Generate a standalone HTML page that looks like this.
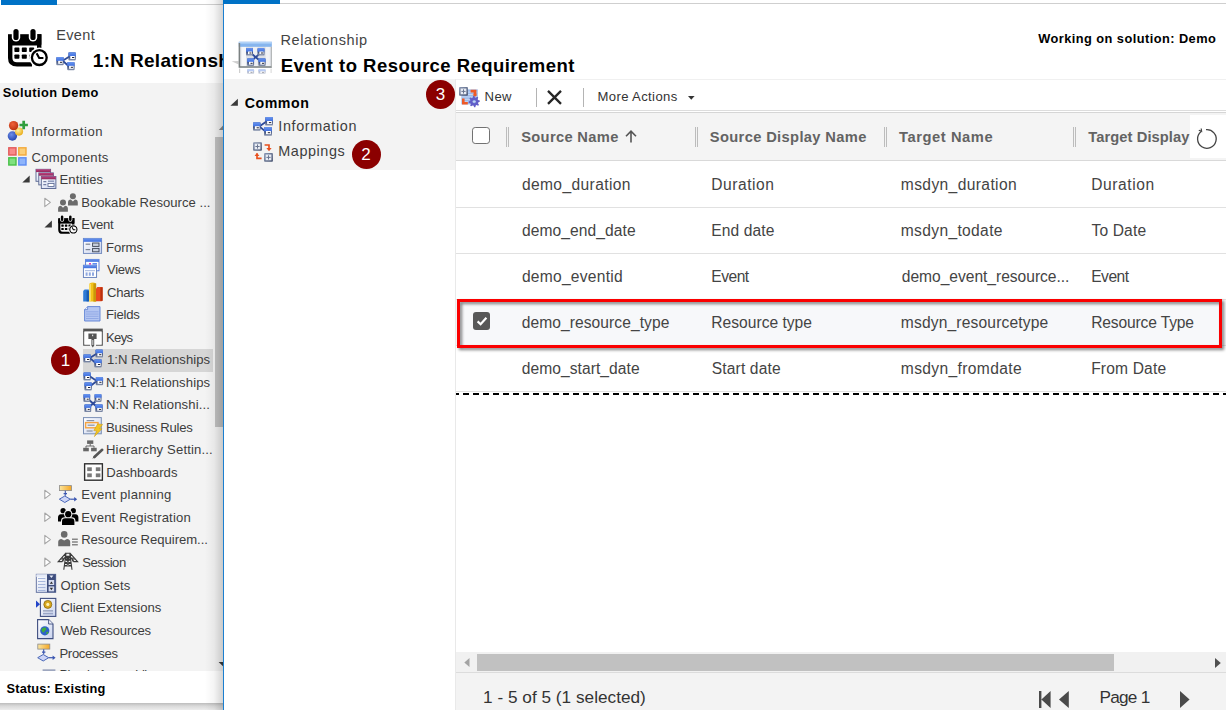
<!DOCTYPE html>
<html><head><meta charset="utf-8">
<style>
*{box-sizing:border-box;margin:0;padding:0}
html,body{width:1226px;height:710px;overflow:hidden;background:#fff;font-family:"Liberation Sans",sans-serif;color:#444}
.a{position:absolute}
.t{position:absolute;white-space:nowrap;line-height:1}
svg{position:absolute;overflow:visible}
#left{left:0;top:0;width:223px;height:710px;overflow:hidden;background:#fff}
#right{left:223px;top:0;width:1003px;height:710px;overflow:hidden;background:#fff}
.badge{position:absolute;width:29px;height:29px;border-radius:50%;background:#8b0000;color:#fff;font-size:17px;text-align:center;line-height:29px}
.hl{position:absolute;left:233px;width:770px;height:1px;background:#e1e1e1}
.sep{position:absolute;top:126.5px;width:3px;height:20px;border:1px solid #bcbcbc;border-top:none;border-bottom:none;background:#f3f3f3}
</style></head><body>
<!-- LEFT WINDOW -->
<div id="left" class="a">
  <div class="a" style="left:1px;top:0;width:56px;height:5px;background:#0072c6"></div>
  <div class="a" style="left:57px;top:4px;width:170px;height:1px;background:#cfcfcf"></div>
  <div class="a" style="left:0;top:83px;width:223px;height:588px;background:#f3f3f3"></div>
  <div id="treeclip" class="a" style="left:0;top:83px;width:215px;height:588px;overflow:hidden"><div class="a" style="left:0;top:-83px">
    <div class="a" style="left:83px;top:349px;width:130px;height:23px;background:#d6d6d6"></div>
<div class="t" style="left:31.30px;top:124.51px;font-size:13.1px;letter-spacing:0.578px;color:#3d3d3d">Information</div>
<div class="t" style="left:31.50px;top:150.51px;font-size:13.1px;letter-spacing:0.290px;color:#3d3d3d">Components</div>
<div class="t" style="left:59.40px;top:172.91px;font-size:13.1px;letter-spacing:0.116px;color:#3d3d3d">Entities</div>
<div class="t" style="left:81.20px;top:195.51px;font-size:13.1px;letter-spacing:0.021px;color:#3d3d3d">Bookable Resource ...</div>
<div class="t" style="left:81.20px;top:217.91px;font-size:13.1px;letter-spacing:-0.261px;color:#3d3d3d">Event</div>
<div class="t" style="left:106.00px;top:240.51px;font-size:13.1px;letter-spacing:-0.012px;color:#3d3d3d">Forms</div>
<div class="t" style="left:107.00px;top:262.91px;font-size:13.1px;letter-spacing:-0.286px;color:#3d3d3d">Views</div>
<div class="t" style="left:107.00px;top:285.51px;font-size:13.1px;letter-spacing:-0.244px;color:#3d3d3d">Charts</div>
<div class="t" style="left:106.00px;top:307.91px;font-size:13.1px;letter-spacing:-0.216px;color:#3d3d3d">Fields</div>
<div class="t" style="left:106.00px;top:330.51px;font-size:13.1px;letter-spacing:-0.654px;color:#3d3d3d">Keys</div>
<div class="t" style="left:106.90px;top:352.91px;font-size:13.1px;letter-spacing:0.033px;color:#3d3d3d">1:N Relationships</div>
<div class="t" style="left:106.00px;top:375.51px;font-size:13.1px;letter-spacing:0.089px;color:#3d3d3d">N:1 Relationships</div>
<div class="t" style="left:106.00px;top:397.91px;font-size:13.1px;letter-spacing:0.115px;color:#3d3d3d">N:N Relationshi...</div>
<div class="t" style="left:106.00px;top:420.51px;font-size:13.1px;letter-spacing:-0.269px;color:#3d3d3d">Business Rules</div>
<div class="t" style="left:106.00px;top:442.91px;font-size:13.1px;letter-spacing:0.143px;color:#3d3d3d">Hierarchy Settin...</div>
<div class="t" style="left:106.30px;top:465.51px;font-size:13.1px;letter-spacing:0.060px;color:#3d3d3d">Dashboards</div>
<div class="t" style="left:81.20px;top:487.91px;font-size:13.1px;letter-spacing:0.273px;color:#3d3d3d">Event planning</div>
<div class="t" style="left:81.20px;top:510.51px;font-size:13.1px;letter-spacing:0.147px;color:#3d3d3d">Event Registration</div>
<div class="t" style="left:81.20px;top:532.91px;font-size:13.1px;letter-spacing:-0.032px;color:#3d3d3d">Resource Requirem...</div>
<div class="t" style="left:82.20px;top:555.51px;font-size:13.1px;letter-spacing:-0.417px;color:#3d3d3d">Session</div>
<div class="t" style="left:60.40px;top:578.51px;font-size:13.1px;letter-spacing:0.153px;color:#3d3d3d">Option Sets</div>
<div class="t" style="left:60.40px;top:601.31px;font-size:13.1px;letter-spacing:-0.020px;color:#3d3d3d">Client Extensions</div>
<div class="t" style="left:60.40px;top:623.91px;font-size:13.1px;letter-spacing:-0.180px;color:#3d3d3d">Web Resources</div>
<div class="t" style="left:59.40px;top:646.51px;font-size:13.1px;letter-spacing:-0.298px;color:#3d3d3d">Processes</div>
<div class="t" style="left:59.40px;top:668.21px;font-size:13.1px;letter-spacing:-0.600px;color:#3d3d3d">Plug-in Assemblies</div>
  </div></div>
  <svg style="left:0;top:0" width="223" height="710" viewBox="0 0 223 710"><defs>
<linearGradient id="gt" x1="0" y1="0" x2="0" y2="1"><stop offset="0" stop-color="#6a95ee"/><stop offset="1" stop-color="#3e6fe0"/></linearGradient>
<linearGradient id="gb" x1="0" y1="0" x2="0" y2="1"><stop offset="0" stop-color="#3f5690"/><stop offset="0.6" stop-color="#475883"/><stop offset="1" stop-color="#8793ad"/></linearGradient>
<linearGradient id="gw" x1="0" y1="0" x2="1" y2="1"><stop offset="0" stop-color="#ffffff"/><stop offset="1" stop-color="#c9d3ee"/></linearGradient>
<linearGradient id="go" x1="0" y1="0" x2="1" y2="0"><stop offset="0" stop-color="#fbe6a0"/><stop offset="1" stop-color="#f5a623"/></linearGradient>
<linearGradient id="gm" x1="0" y1="0" x2="0" y2="1"><stop offset="0" stop-color="#c0407e"/><stop offset="1" stop-color="#8e2a5c"/></linearGradient>
<linearGradient id="gs" x1="0" y1="0" x2="1" y2="1"><stop offset="0" stop-color="#8a98b4"/><stop offset="1" stop-color="#43506e"/></linearGradient>
<radialGradient id="rr" cx=".4" cy=".35" r=".7"><stop offset="0" stop-color="#f0623a"/><stop offset="1" stop-color="#b8300e"/></radialGradient>
<radialGradient id="rb" cx=".4" cy=".35" r=".7"><stop offset="0" stop-color="#6d8de8"/><stop offset="1" stop-color="#2243ae"/></radialGradient>
<radialGradient id="ry" cx=".4" cy=".35" r=".7"><stop offset="0" stop-color="#fff0a0"/><stop offset="1" stop-color="#e8a810"/></radialGradient>
</defs><g transform="translate(8,29) scale(1.0)"><path d="M2.2 7.5 H31.2 V20 H29 V16.5 H4.4 V29 Q4.4 33.2 9 33.2 H24 V37.6 H9 Q0 37.6 0 29 V7.5 Z" fill="#000"/><rect x="0" y="5.2" width="33.4" height="10.5" fill="#000"/><rect x="29" y="5.2" width="4.4" height="20" fill="#000"/><rect x="3.8" y="-1.2" width="8.4" height="13.8" rx="4.2" fill="#fff"/><rect x="5.4" y="0" width="5.2" height="11" rx="2.6" fill="#000"/><rect x="20.8" y="-1.2" width="8.4" height="13.8" rx="4.2" fill="#fff"/><rect x="22.4" y="0" width="5.2" height="11" rx="2.6" fill="#000"/><rect x="6.4" y="18.6" width="5" height="4.4" rx="0.8" fill="#000"/><rect x="13.8" y="18.6" width="5" height="4.4" rx="0.8" fill="#000"/><rect x="21.2" y="18.6" width="5" height="4.4" rx="0.8" fill="#000"/><rect x="6.4" y="25.4" width="5" height="4.4" rx="0.8" fill="#000"/><rect x="13.8" y="25.4" width="5" height="4.4" rx="0.8" fill="#000"/><rect x="21.2" y="25.4" width="5" height="4.4" rx="0.8" fill="#000"/><circle cx="31.3" cy="28.6" r="10.2" fill="#fff"/><circle cx="31.3" cy="28.6" r="7.4" fill="#fff" stroke="#000" stroke-width="2.3"/><path d="M28.6 24.2 L31.2 29 H35.4" fill="none" stroke="#000" stroke-width="2.1"/></g><path d="M63.0 60.5 L69.5 56.5 M63.0 61.0 L68.5 66.0" stroke="#2d4a9a" stroke-width="1.8" fill="none"/><rect x="56.3" y="57.0" width="7.4" height="8.2" rx="0.9" fill="url(#gb)"/><rect x="56.3" y="57.0" width="7.4" height="4.1" rx="0.9" fill="url(#gt)"/><rect x="58.2" y="60.8" width="4.5" height="3.0" fill="#fff"/><rect x="59.9" y="61.8" width="2.2" height="1" fill="#223"/><rect x="68.4" y="52.2" width="7.4" height="8.2" rx="0.9" fill="url(#gb)"/><rect x="68.4" y="52.2" width="7.4" height="4.1" rx="0.9" fill="url(#gt)"/><rect x="70.3" y="56.0" width="4.5" height="3.0" fill="#fff"/><rect x="72.0" y="57.0" width="2.2" height="1" fill="#223"/><rect x="67.2" y="62.0" width="7.4" height="8.2" rx="0.9" fill="url(#gb)"/><rect x="67.2" y="62.0" width="7.4" height="4.1" rx="0.9" fill="url(#gt)"/><rect x="69.1" y="65.8" width="4.5" height="3.0" fill="#fff"/><rect x="70.8" y="66.8" width="2.2" height="1" fill="#223"/><circle cx="12.4" cy="136" r="4.7" fill="url(#rb)"/><circle cx="19" cy="131.6" r="4.1" fill="url(#ry)"/><circle cx="13.6" cy="125.6" r="4.7" fill="url(#rr)"/><path d="M23.7 120.8 V129.2 M19.5 125 H27.9" stroke="#2f9e3c" stroke-width="2.7" fill="none"/><rect x="8.8" y="147.8" width="7.2" height="7.2" fill="#f98a8a" stroke="#e35a5a" stroke-width="1.4"/><rect x="18.8" y="147.8" width="7.2" height="7.2" fill="#fbcf7a" stroke="#f3a93a" stroke-width="1.4"/><rect x="8.8" y="157.8" width="7.2" height="7.2" fill="#7fe07f" stroke="#48c048" stroke-width="1.4"/><rect x="18.8" y="157.8" width="7.2" height="7.2" fill="#8eb4fb" stroke="#5d8cf3" stroke-width="1.4"/><rect x="36" y="169.3" width="14.6" height="12" fill="url(#gw)" stroke="#56648f" stroke-width="0.9"/><rect x="36" y="169.3" width="14.6" height="2.8" fill="url(#gm)"/><rect x="38.8" y="172.9" width="14.6" height="12" fill="url(#gw)" stroke="#56648f" stroke-width="0.9"/><rect x="38.8" y="172.9" width="14.6" height="2.8" fill="url(#gm)"/><rect x="41.3" y="176.5" width="14.6" height="12" fill="url(#gw)" stroke="#56648f" stroke-width="0.9"/><rect x="41.3" y="176.5" width="14.6" height="2.8" fill="url(#gm)"/><rect x="43.3" y="181.2" width="3" height="1" fill="#56648f"/><rect x="43.3" y="184.2" width="3" height="1" fill="#56648f"/><rect x="48" y="180.6" width="6" height="1.2" fill="#7d8ab0"/><rect x="48" y="183.4" width="6" height="3" fill="#fff" stroke="#56648f" stroke-width="0.8"/><path d="M29.7 175.6 V182.6 H22.3 Z" fill="#3a3a3a"/><path d="M44.8 198.2 L50.4 202.4 L44.8 206.6 Z" fill="#fff" stroke="#a6a6a6" stroke-width="1.1" stroke-linejoin="round"/><path d="M51.9 220.6 V227.6 H44.5 Z" fill="#3a3a3a"/><path d="M44.8 490.2 L50.4 494.4 L44.8 498.6 Z" fill="#fff" stroke="#a6a6a6" stroke-width="1.1" stroke-linejoin="round"/><path d="M44.8 513.0 L50.4 517.2 L44.8 521.4 Z" fill="#fff" stroke="#a6a6a6" stroke-width="1.1" stroke-linejoin="round"/><path d="M44.8 535.4 L50.4 539.6 L44.8 543.8 Z" fill="#fff" stroke="#a6a6a6" stroke-width="1.1" stroke-linejoin="round"/><path d="M44.8 558.0 L50.4 562.2 L44.8 566.4 Z" fill="#fff" stroke="#a6a6a6" stroke-width="1.1" stroke-linejoin="round"/><circle cx="72.9" cy="196.2" r="3.0" fill="#6b6b6b"/><path d="M68.0 205.5 V202.4 Q68.0 199.8 70.9 199.6 L72.9 201.6 L74.9 199.6 Q77.8 199.8 77.8 202.4 V205.5 Z" fill="#6b6b6b"/><circle cx="63.0" cy="202.4" r="3.0" fill="#6b6b6b"/><path d="M58.1 211.7 V208.6 Q58.1 206.0 61.0 205.8 L63.0 207.8 L65.0 205.8 Q67.9 206.0 67.9 208.6 V211.7 Z" fill="#6b6b6b"/><g transform="translate(58.2,215.6) scale(0.485)"><path d="M2.2 7.5 H31.2 V20 H29 V16.5 H4.4 V29 Q4.4 33.2 9 33.2 H24 V37.6 H9 Q0 37.6 0 29 V7.5 Z" fill="#000"/><rect x="0" y="5.2" width="33.4" height="10.5" fill="#000"/><rect x="29" y="5.2" width="4.4" height="20" fill="#000"/><rect x="3.8" y="-1.2" width="8.4" height="13.8" rx="4.2" fill="#fff"/><rect x="5.4" y="0" width="5.2" height="11" rx="2.6" fill="#000"/><rect x="20.8" y="-1.2" width="8.4" height="13.8" rx="4.2" fill="#fff"/><rect x="22.4" y="0" width="5.2" height="11" rx="2.6" fill="#000"/><rect x="6.4" y="18.6" width="5" height="4.4" rx="0.8" fill="#000"/><rect x="13.8" y="18.6" width="5" height="4.4" rx="0.8" fill="#000"/><rect x="21.2" y="18.6" width="5" height="4.4" rx="0.8" fill="#000"/><rect x="6.4" y="25.4" width="5" height="4.4" rx="0.8" fill="#000"/><rect x="13.8" y="25.4" width="5" height="4.4" rx="0.8" fill="#000"/><rect x="21.2" y="25.4" width="5" height="4.4" rx="0.8" fill="#000"/><circle cx="31.3" cy="28.6" r="10.2" fill="#fff"/><circle cx="31.3" cy="28.6" r="7.4" fill="#fff" stroke="#000" stroke-width="2.3"/><path d="M28.6 24.2 L31.2 29 H35.4" fill="none" stroke="#000" stroke-width="2.1"/></g><rect x="83.4" y="238.4" width="18.2" height="15" fill="url(#gw)" stroke="#6c84ba" stroke-width="0.9"/><rect x="83.4" y="238.4" width="18.2" height="3.4" fill="url(#gt)"/><rect x="85.6" y="243.6" width="4.6" height="1.2" fill="#7b8494"/><rect x="92.6" y="243" width="6.4" height="3.4" fill="#c9d0de" stroke="#3d4454" stroke-width="0.9"/><rect x="85.6" y="249.0" width="4.6" height="1.2" fill="#7b8494"/><rect x="92.6" y="248.4" width="6.4" height="3.4" fill="#c9d0de" stroke="#3d4454" stroke-width="0.9"/><rect x="85.6" y="259.4" width="13.4" height="11.4" fill="#fff" stroke="#4e74d8" stroke-width="0.9"/><rect x="85.6" y="259.4" width="13.4" height="2.4" fill="url(#gt)"/><rect x="89" y="263" width="2" height="1.6" fill="#e23cc0"/><rect x="92.5" y="263" width="4.5" height="1.6" fill="#5d8cf3"/><rect x="83.4" y="265.2" width="13.2" height="12.2" fill="#fff" stroke="#5c78b8" stroke-width="0.9"/><rect x="83.4" y="265.2" width="13.2" height="3" fill="url(#gt)"/><rect x="85" y="270.2" width="10" height="1" fill="#9fb2dc"/><rect x="85.6" y="272.4" width="2" height="3.4" fill="#8fa8e0"/><rect x="88.8" y="272.4" width="2" height="3.4" fill="#8fa8e0"/><rect x="92" y="272.4" width="2" height="3.4" fill="#8fa8e0"/><path d="M83.2 291 L84.6 289.6 H88.8 V301.4 H83.2 Z" fill="#2e7bd6"/><rect x="86.6" y="290.6" width="2.4" height="10.8" fill="#1b5cb0"/><path d="M89.2 283.8 Q92.6 281.4 96 283.4 V301.6 H89.2 Z" fill="#f2c21a"/><rect x="93.4" y="283.4" width="2.8" height="18.2" fill="#c8960a"/><rect x="89.4" y="284" width="1.4" height="17.4" fill="#fbe27a"/><path d="M96 288.4 L97.4 287 H102.6 V300.4 L101.6 301.2 H96 Z" fill="#ea4a1e"/><rect x="100.4" y="287.4" width="2.2" height="13.4" fill="#b8300e"/><path d="M87.6 306.6 H100 V321 H84.6 V309.6 Z" fill="#b4c6f2" stroke="#5b7fd2" stroke-width="0.9"/><path d="M84.6 309.6 H87.6 V306.6" fill="#e8eefc" stroke="#5b7fd2" stroke-width="0.8"/><rect x="86" y="311.4" width="12.6" height="0.9" fill="#8ea6e4"/><rect x="86" y="313.6" width="12.6" height="0.9" fill="#8ea6e4"/><rect x="86" y="315.8" width="12.6" height="0.9" fill="#8ea6e4"/><rect x="86" y="318" width="12.6" height="0.9" fill="#8ea6e4"/><rect x="83.2" y="328.6" width="19.6" height="3" fill="#555"/><path d="M83.8 331 V345.2 H90 M96 345.2 H102.2 V331" fill="none" stroke="#555" stroke-width="1.3"/><rect x="84.4" y="331.6" width="17.2" height="13" fill="#fff"/><path d="M88.4 333.6 H96.6 V339 H94.2 V345.6 L92.8 347.4 L91.4 345.6 V339 H88.4 Z" fill="#555"/><rect x="92" y="334.6" width="1.2" height="1.6" fill="#ddd"/><rect x="92.4" y="340" width="0.9" height="5" fill="#eee"/><path d="M90.1 357.7 L96.6 353.7 M90.1 358.2 L95.6 363.2" stroke="#2d4a9a" stroke-width="1.8" fill="none"/><rect x="83.4" y="354.2" width="7.4" height="8.2" rx="0.9" fill="url(#gb)"/><rect x="83.4" y="354.2" width="7.4" height="4.1" rx="0.9" fill="url(#gt)"/><rect x="85.3" y="358.0" width="4.5" height="3.0" fill="#fff"/><rect x="87.0" y="359.0" width="2.2" height="1" fill="#223"/><rect x="95.5" y="349.4" width="7.4" height="8.2" rx="0.9" fill="url(#gb)"/><rect x="95.5" y="349.4" width="7.4" height="4.1" rx="0.9" fill="url(#gt)"/><rect x="97.4" y="353.2" width="4.5" height="3.0" fill="#fff"/><rect x="99.1" y="354.2" width="2.2" height="1" fill="#223"/><rect x="94.3" y="359.2" width="7.4" height="8.2" rx="0.9" fill="url(#gb)"/><rect x="94.3" y="359.2" width="7.4" height="4.1" rx="0.9" fill="url(#gt)"/><rect x="96.2" y="363.0" width="4.5" height="3.0" fill="#fff"/><rect x="97.9" y="364.0" width="2.2" height="1" fill="#223"/><path d="M90.1 376.5 L96.1 380.5 M91.1 385.5 L96.1 381.5" stroke="#2d4a9a" stroke-width="1.8" fill="none"/><rect x="83.4" y="372.2" width="7.4" height="8.2" rx="0.9" fill="url(#gb)"/><rect x="83.4" y="372.2" width="7.4" height="4.1" rx="0.9" fill="url(#gt)"/><rect x="85.3" y="376.0" width="4.5" height="3.0" fill="#fff"/><rect x="87.0" y="377.0" width="2.2" height="1" fill="#223"/><rect x="84.4" y="382.2" width="7.4" height="8.2" rx="0.9" fill="url(#gb)"/><rect x="84.4" y="382.2" width="7.4" height="4.1" rx="0.9" fill="url(#gt)"/><rect x="86.3" y="386.0" width="4.5" height="3.0" fill="#fff"/><rect x="88.0" y="387.0" width="2.2" height="1" fill="#223"/><rect x="95.7" y="377.0" width="7.4" height="8.2" rx="0.9" fill="url(#gb)"/><rect x="95.7" y="377.0" width="7.4" height="4.1" rx="0.9" fill="url(#gt)"/><rect x="97.6" y="380.8" width="4.5" height="3.0" fill="#fff"/><rect x="99.3" y="381.8" width="2.2" height="1" fill="#223"/><path d="M89.1 400.0 L97.1 407.0 M97.1 400.0 L89.1 407.0" stroke="#2d4a9a" stroke-width="2" fill="none"/><rect x="83.4" y="394.1" width="6.8" height="7.8" rx="0.9" fill="url(#gb)"/><rect x="83.4" y="394.1" width="6.8" height="3.9" rx="0.9" fill="url(#gt)"/><rect x="85.3" y="397.7" width="3.9" height="2.8" fill="#fff"/><rect x="86.7" y="398.7" width="2.0" height="1" fill="#223"/><rect x="94.5" y="394.1" width="7" height="7.8" rx="0.9" fill="url(#gb)"/><rect x="94.5" y="394.1" width="7" height="3.9" rx="0.9" fill="url(#gt)"/><rect x="96.4" y="397.7" width="4.1" height="2.8" fill="#fff"/><rect x="97.9" y="398.7" width="2.1" height="1" fill="#223"/><rect x="84.4" y="404.3" width="6.8" height="7.8" rx="0.9" fill="url(#gb)"/><rect x="84.4" y="404.3" width="6.8" height="3.9" rx="0.9" fill="url(#gt)"/><rect x="86.3" y="407.9" width="3.9" height="2.8" fill="#fff"/><rect x="87.7" y="408.9" width="2.0" height="1" fill="#223"/><rect x="95.3" y="404.3" width="7.4" height="7.8" rx="0.9" fill="url(#gb)"/><rect x="95.3" y="404.3" width="7.4" height="3.9" rx="0.9" fill="url(#gt)"/><rect x="97.2" y="407.9" width="4.5" height="2.8" fill="#fff"/><rect x="98.9" y="408.9" width="2.2" height="1" fill="#223"/><rect x="83.5" y="417.6" width="17.8" height="16.2" fill="url(#gw)" stroke="#7a8fb5" stroke-width="1"/><rect x="86.6" y="420" width="7.6" height="1.2" fill="#8a93a5"/><rect x="85.6" y="422.6" width="12.4" height="5.2" fill="#eef0f6" stroke="#f5a340" stroke-width="1.4"/><rect x="87.6" y="424.6" width="7" height="1.2" fill="#8a93a5"/><rect x="86.6" y="430.4" width="6" height="1.2" fill="#8a93a5"/><path d="M97.6 424 L102.6 424.4 L99.6 428.6 L102 428.8 L94.4 436.6 L96.6 430.8 L93.8 430.6 Z" fill="#f2c522" stroke="#c8960a" stroke-width="0.5"/><rect x="87.1" y="440.4" width="6.2" height="3.5" fill="#666"/><rect x="83.2" y="447.8" width="5.6" height="3.5" fill="#666"/><rect x="91.1" y="447.8" width="5.6" height="3.5" fill="#666"/><path d="M90.2 444 V446 M86 447.8 V446 H94 V447.8" stroke="#666" stroke-width="1" fill="none"/><path d="M102.2 449.8 L94.4 457" stroke="#555" stroke-width="2.6" stroke-linecap="round"/><path d="M94.6 455.4 L92.2 458.8 L95.8 457" fill="#555"/><rect x="83.4" y="462.6" width="20.2" height="18.8" fill="#fff"/><rect x="84.6" y="463.8" width="17.8" height="16.4" fill="#fff" stroke="#2e2e2e" stroke-width="1.4"/><rect x="87.2" y="467.3" width="4.6" height="3.8" fill="#7a7a7a"/><rect x="95.8" y="467.3" width="4.6" height="3.8" fill="#7a7a7a"/><rect x="87.2" y="473.4" width="4.6" height="3.8" fill="#7a7a7a"/><rect x="95.8" y="473.4" width="4.6" height="3.8" fill="#7a7a7a"/><rect x="59.4" y="485.6" width="12" height="5" fill="url(#go)" stroke="#8a8a8a" stroke-width="0.8"/><path d="M65.3 490.8 V495.8 M63.6 493.6 H67.0" stroke="#3a56b0" stroke-width="1.1" fill="none"/><path d="M59.3 499.2 L64.8 496.0 L70.3 499.2 L64.8 502.5 Z" fill="#cdd5f7" stroke="#4a68b8" stroke-width="1"/><path d="M70.3 499.2 H75.0" stroke="#3a56b0" stroke-width="1.2"/><path d="M74.2 497.0 L77.2 499.2 L74.2 501.4 Z" fill="#3a56b0"/><circle cx="63.1" cy="510.7" r="2.6" fill="#000"/><path d="M58.0 521.6 V517.6 Q58.0 514.4 60.9 514.2 H65.3 Q68.2 514.4 68.2 517.6 V521.6 Z" fill="#000"/><circle cx="73.3" cy="510.7" r="2.6" fill="#000"/><path d="M68.2 521.6 V517.6 Q68.2 514.4 71.1 514.2 H75.5 Q78.39999999999999 514.4 78.39999999999999 517.6 V521.6 Z" fill="#000"/><circle cx="68.2" cy="514.2" r="4.1" fill="#f3f3f3"/><path d="M61 525.4 V520.6 Q61 517.2 65 517.2 H71.4 Q75.4 517.2 75.4 520.6 V525.4 Z" fill="#f3f3f3"/><circle cx="68.2" cy="514.2" r="3.1" fill="#000"/><path d="M62 524.9 V521.4 Q62 518.3 65.2 518.3 H71.2 Q74.4 518.3 74.4 521.4 V524.9 Z" fill="#000"/><circle cx="64.2" cy="534.4" r="3.3" fill="#6b6b6b"/><path d="M58.2 546.2 V542 Q58.2 539.4 61.4 539 L64.2 540.4 L67 539 Q70.2 539.4 70.2 542 V546.2 Z" fill="#6b6b6b"/><rect x="72" y="538.6" width="5.8" height="1.2" fill="#6b6b6b"/><rect x="72" y="541.4" width="5.8" height="1.2" fill="#6b6b6b"/><rect x="72" y="544.2" width="5.8" height="1.2" fill="#6b6b6b"/><path d="M66 553.2 L63.8 569.8 M69.8 553.2 L72 569.8 M66 553.2 H69.8 M65.6 556.4 H70.2 M65.2 559.6 H70.6 M64.8 562.8 H71 M64.4 566 H71.4 M65.6 556.4 L70.6 559.6 M70.2 556.4 L65.2 559.6 M65.2 559.6 L71 562.8 M70.6 559.6 L64.8 562.8 M64.8 562.8 L71.4 566 M71 562.8 L64.4 566" stroke="#3a3a3a" stroke-width="1.1" fill="none"/><path d="M65.4 553.6 L58.2 561.6 H62 L65.4 556.8 Z M70.4 553.6 L77.6 561.6 H73.8 L70.4 556.8 Z" stroke="#3a3a3a" stroke-width="1.1" fill="none"/><path d="M62.6 556.8 L63.2 561.4 M60.4 559.2 L64.4 558.6 M73.2 556.8 L72.6 561.4 M75.4 559.2 L71.4 558.6" stroke="#3a3a3a" stroke-width="0.9"/><rect x="36.3" y="574.3" width="19.4" height="18" fill="url(#gw)" stroke="#5a6a9a" stroke-width="0.9"/><rect x="47" y="574.3" width="8.7" height="18" fill="#3d4c7c"/><rect x="38" y="578" width="7.4" height="0.9" fill="#9fb0d8"/><rect x="38" y="581" width="7.4" height="0.9" fill="#9fb0d8"/><rect x="38" y="584" width="7.4" height="0.9" fill="#9fb0d8"/><rect x="38" y="587" width="7.4" height="0.9" fill="#9fb0d8"/><rect x="38" y="590" width="7.4" height="0.9" fill="#9fb0d8"/><rect x="36.3" y="574.3" width="10.7" height="2.6" fill="#e6ebf8"/><path d="M49.4 575.6 H53.4 L51.4 578 Z" fill="#e6ebf8"/><rect x="48.6" y="580" width="5.6" height="5" fill="#d5dbee"/><rect x="48.6" y="586.4" width="5.6" height="5" fill="#d5dbee"/><path d="M49.8 583.8 L51.4 581.4 L53 583.8 Z M49.8 587.8 L51.4 590.2 L53 587.8 Z" fill="#2c2c2c"/><rect x="40.4" y="598.4" width="15.4" height="18" fill="url(#gw)" stroke="#3f4e80" stroke-width="1.1"/><circle cx="47.8" cy="604.4" r="4" fill="#d9a81e" stroke="#8a6a10" stroke-width="0.8"/><circle cx="47.8" cy="604.4" r="1.6" fill="#fff3b0"/><rect x="43" y="610.4" width="10" height="1" fill="#7a86a8"/><rect x="43" y="612.8" width="10" height="1.6" fill="#9aa6c8"/><path d="M36 600.6 L40 604.2 L36 607.8 Z" fill="#2345c8"/><path d="M37.6 619.6 H48.6 L53 624 V638.6 H37.6 Z" fill="url(#gw)" stroke="#3f4e80" stroke-width="1.1"/><path d="M48.6 619.6 V624 H53" fill="#eef1fa" stroke="#3f4e80" stroke-width="0.9"/><circle cx="44.8" cy="630.8" r="4.6" fill="#2d62c8"/><path d="M41.6 629 Q43.4 626.6 46 627.8 Q47 629.6 45.2 630.6 Q44.4 632.6 42.8 632.4 Q41.2 631 41.6 629 Z M46.4 632 Q48 631.2 48.6 632.6 Q47.8 634.4 46.4 634.4 Z" fill="#3fae3a"/><rect x="37.8" y="644.1" width="12" height="5" fill="url(#go)" stroke="#8a8a8a" stroke-width="0.8"/><path d="M43.7 649.3 V654.3 M42.0 652.1 H45.4" stroke="#3a56b0" stroke-width="1.1" fill="none"/><path d="M37.7 657.7 L43.2 654.5 L48.7 657.7 L43.2 661.0 Z" fill="#cdd5f7" stroke="#4a68b8" stroke-width="1"/><path d="M48.7 657.7 H53.4" stroke="#3a56b0" stroke-width="1.2"/><path d="M52.6 655.5 L55.6 657.7 L52.6 659.9 Z" fill="#3a56b0"/><rect x="42.6" y="669.5" width="12.8" height="1.2" fill="#7a86a8"/><path d="M218.8 129.9 L223 125.4 V129.9 Z" fill="#8a8a8a"/><path d="M218.6 662 H223 V666.3 Z" fill="#3a3a3a"/></svg>
  <div class="a" style="left:0;top:671px;width:223px;height:32px;background:#fff"></div>
  <div class="a" style="left:0;top:703px;width:223px;height:7px;background:linear-gradient(#bcbcbc,#dadada 45%,#ececec)"></div>
  <!-- scrollbar -->
  <div class="a" style="left:215px;top:137px;width:8px;height:290px;background:#c1c1c1"></div>
  <!-- shadow from overlay -->
  <div class="a" style="left:205px;top:0;width:18px;height:710px;background:linear-gradient(90deg,rgba(0,0,0,0),rgba(0,0,0,.045) 50%,rgba(0,0,0,.17))"></div>
  <div id="ltext" class="a" style="left:0;top:0;width:223px;height:710px;overflow:hidden">
<div class="t" style="left:56.20px;top:27.73px;font-size:14.5px;letter-spacing:0.363px;color:#444">Event</div>
<div class="t" style="left:92.80px;top:50.62px;font-size:19px;letter-spacing:0.314px;color:#000;font-weight:bold">1:N Relationsh</div>
<div class="t" style="left:2.80px;top:86.76px;font-size:12.8px;letter-spacing:0.436px;color:#000;font-weight:bold">Solution Demo</div>
<div class="t" style="left:6.60px;top:682.96px;font-size:12.8px;letter-spacing:0.134px;color:#000;font-weight:bold">Status: Existing</div>
  </div>
  <div class="badge" style="left:51px;top:346px">1</div>
</div>
<!-- RIGHT WINDOW -->
<div id="right" class="a">
  <div class="a" style="left:0;top:0;width:1px;height:710px;background:#1b7fd0"></div>
  <div class="a" style="left:0;top:0;width:57px;height:4px;background:#0072c6"></div>
  <div class="a" style="left:57px;top:3px;width:950px;height:1px;background:#cfcfcf"></div>
  <div class="a" style="left:1px;top:79px;width:232px;height:91px;background:#f3f3f3"></div>
  <div class="a" style="left:233px;top:79px;width:770px;height:1px;background:#f0f0f0"></div>
  <div class="a" style="left:233px;top:110px;width:770px;height:1px;background:#dddddd"></div>
  <div class="a" style="left:233px;top:112px;width:770px;height:49px;background:#f4f4f4;border-top:1px solid #d6d6d6;border-bottom:1px solid #d9d9d9"></div>
  <div class="a" style="left:967px;top:114.5px;width:36px;height:43.5px;background:#fff"></div>
  <div class="a" style="left:232px;top:79px;width:1px;height:631px;background:#e9e9e9"></div>
  <!-- rows -->
  <div class="hl" style="top:207px"></div>
  <div class="hl" style="top:253px"></div>
  <div class="hl" style="top:299px"></div>
  <div class="a" style="left:233px;top:300px;width:770px;height:45px;background:#f7f8fa"></div>
  <div class="hl" style="top:345px"></div>
  <div class="a" style="left:234px;top:299px;width:765px;height:49px;border:3px solid #fb0000;filter:drop-shadow(2px 2.5px 1.8px rgba(0,0,0,.5))"></div>
  <div class="hl" style="top:391px"></div>
  <div class="a" style="left:233px;top:393px;width:770px;height:2px;overflow:hidden"><div class="a" style="left:-3px;top:0;width:790px;height:2px;background:repeating-linear-gradient(90deg,#000 0,#000 6.2px,transparent 6.2px,transparent 10px)"></div></div>
  <!-- header widgets -->
  <div class="a" style="left:249px;top:126.5px;width:17.5px;height:17px;border:1.3px solid #727272;border-radius:3.2px;background:#fff"></div>
  <div class="sep" style="left:283px"></div>
  <div class="sep" style="left:471.5px"></div>
  <div class="sep" style="left:660.5px"></div>
  <div class="sep" style="left:850px"></div>
  <!-- selected checkbox -->
  <div class="a" style="left:249.5px;top:312px;width:17.5px;height:18px;border-radius:3px;background:#585858"></div>
  <svg style="left:249.5px;top:312px" width="18" height="18" viewBox="0 0 18 18"><path d="M4.6 9.4 L7.6 12.2 L13.4 5.8" fill="none" stroke="#fff" stroke-width="2.2"/></svg>
  <!-- toolbar -->
  <div class="a" style="left:312.5px;top:88px;width:1px;height:19px;background:#b4b4b4"></div>
  <div class="a" style="left:359.5px;top:88px;width:1px;height:19px;background:#b4b4b4"></div>
  <svg style="left:324px;top:89.8px" width="15" height="15" viewBox="0 0 15 15"><path d="M1 0.9 L14 13.9 M14 0.9 L1 13.9" stroke="#262626" stroke-width="2.3" fill="none"/></svg>
  <svg style="left:465.2px;top:96.4px" width="7" height="4" viewBox="0 0 7 4"><path d="M0 0H6.6L3.3 3.7Z" fill="#333"/></svg>
  <!-- sort arrow -->
  <svg style="left:401px;top:130px" width="14" height="13" viewBox="0 0 14 13"><path d="M7 12.5V1.5M2 6.3L7 1.2L12 6.3" fill="none" stroke="#555" stroke-width="1.6"/></svg>
  <!-- refresh -->
  <svg style="left:972px;top:128px" width="22" height="22" viewBox="0 0 22 22"><path d="M6.2 3.6 A9.3 9.3 0 1 0 11 1.7" fill="none" stroke="#444" stroke-width="1.3"/><path d="M3.8 2.2 L6.6 3.4 L6.2 0.5" fill="none" stroke="#444" stroke-width="1.2"/></svg>
  <svg style="left:0;top:0" width="1003" height="710" viewBox="223 0 1003 710"><path d="M231.6 61.2 L238.6 61 V64.6 Z" fill="#cfcfcf"/><rect x="238.8" y="41.8" width="33" height="25.8" fill="#dde0e6"/><rect x="241.4" y="46.6" width="4.6" height="20" fill="#f6f7f9"/><rect x="253" y="46.6" width="4.6" height="20" fill="#eef0f3"/><rect x="265.6" y="46.6" width="4.2" height="20" fill="#f1f2f5"/><rect x="238.8" y="41.8" width="33" height="5" fill="#86b5ee"/><rect x="238.8" y="41.8" width="33" height="1.8" fill="#b2d3f8"/><path d="M239.4 43 V67 H271.8" fill="none" stroke="#7b8181" stroke-width="1.5"/><path d="M271.4 46.8 V67" stroke="#a9adad" stroke-width="0.9"/><path d="M252.6 54.6 L258.8 59.8 M258.8 54.6 L252.6 59.8" stroke="#2d4a9a" stroke-width="1.9"/><rect x="246.1" y="48.0" width="6.9" height="7.6" rx="0.9" fill="url(#gb)"/><rect x="246.1" y="48.0" width="6.9" height="3.8" rx="0.9" fill="url(#gt)"/><rect x="248.0" y="51.5" width="4.0" height="2.7" fill="#fff"/><rect x="249.4" y="52.5" width="2.1" height="1" fill="#223"/><rect x="257.5" y="48.0" width="7" height="7.6" rx="0.9" fill="url(#gb)"/><rect x="257.5" y="48.0" width="7" height="3.8" rx="0.9" fill="url(#gt)"/><rect x="259.4" y="51.5" width="4.1" height="2.7" fill="#fff"/><rect x="260.9" y="52.5" width="2.1" height="1" fill="#223"/><rect x="247.1" y="58.2" width="7" height="7.8" rx="0.9" fill="url(#gb)"/><rect x="247.1" y="58.2" width="7" height="3.9" rx="0.9" fill="url(#gt)"/><rect x="249.0" y="61.8" width="4.1" height="2.8" fill="#fff"/><rect x="250.5" y="62.8" width="2.1" height="1" fill="#223"/><rect x="258.4" y="58.2" width="7.2" height="7.8" rx="0.9" fill="url(#gb)"/><rect x="258.4" y="58.2" width="7.2" height="3.9" rx="0.9" fill="url(#gt)"/><rect x="260.3" y="61.8" width="4.3" height="2.8" fill="#fff"/><rect x="261.9" y="62.8" width="2.2" height="1" fill="#223"/><g opacity="0.4"><rect x="247.1" y="69.2" width="7" height="4.6" rx="0.9" fill="url(#gb)"/><rect x="247.1" y="69.2" width="7" height="2.3" rx="0.9" fill="url(#gt)"/><rect x="249.0" y="71.3" width="4.1" height="1.7" fill="#fff"/><rect x="250.5" y="71.9" width="2.1" height="1" fill="#223"/><rect x="258.4" y="69.2" width="7.2" height="4.6" rx="0.9" fill="url(#gb)"/><rect x="258.4" y="69.2" width="7.2" height="2.3" rx="0.9" fill="url(#gt)"/><rect x="260.3" y="71.3" width="4.3" height="1.7" fill="#fff"/><rect x="261.9" y="71.9" width="2.2" height="1" fill="#223"/><rect x="239" y="68.6" width="1.2" height="4.4" fill="#888"/><rect x="270.6" y="68.6" width="1" height="4.4" fill="#999"/></g><path d="M237.9 98.8 V105.8 H230.4 Z" fill="#3a3a3a"/><path d="M260 126 L266.4 121.6 M260 127 L265.4 131.4" stroke="#2d4a9a" stroke-width="1.8" fill="none"/><rect x="253.0" y="122.3" width="7.6" height="8.4" rx="0.9" fill="url(#gb)"/><rect x="253.0" y="122.3" width="7.6" height="4.2" rx="0.9" fill="url(#gt)"/><rect x="254.9" y="126.2" width="4.7" height="3.0" fill="#fff"/><rect x="256.6" y="127.3" width="2.3" height="1" fill="#223"/><rect x="265.2" y="117.0" width="7.7" height="8.6" rx="0.9" fill="url(#gb)"/><rect x="265.2" y="117.0" width="7.7" height="4.3" rx="0.9" fill="url(#gt)"/><rect x="267.1" y="121.0" width="4.8" height="3.1" fill="#fff"/><rect x="268.9" y="122.1" width="2.3" height="1" fill="#223"/><rect x="264.1" y="127.0" width="7.8" height="8.8" rx="0.9" fill="url(#gb)"/><rect x="264.1" y="127.0" width="7.8" height="4.4" rx="0.9" fill="url(#gt)"/><rect x="266.0" y="131.0" width="4.9" height="3.2" fill="#fff"/><rect x="267.8" y="132.2" width="2.3" height="1" fill="#223"/><rect x="253.1" y="142.2" width="8.8" height="8.6" rx="0.8" fill="url(#gs)"/><rect x="254.6" y="143.6" width="5.8" height="5.8" fill="#e8ecf4"/><path d="M257.5 144.39999999999998 V148.6 M255.4 146.5 H259.6" stroke="#6a7590" stroke-width="1" fill="none"/><rect x="264.1" y="153.1" width="8.8" height="8.6" rx="0.8" fill="url(#gs)"/><rect x="265.6" y="154.5" width="5.8" height="5.8" fill="#e8ecf4"/><path d="M268.5 155.29999999999998 V159.5 M266.40000000000003 157.4 H270.6" stroke="#6a7590" stroke-width="1" fill="none"/><path d="M264.6 145 H269 V148.4" stroke="#e8501e" stroke-width="1.7" fill="none"/><path d="M266.4 148 H271.6 L269 151.2 Z" fill="#e8501e"/><path d="M257 153.6 V158.4 H261.6" stroke="#e8501e" stroke-width="1.7" fill="none"/><path d="M254.6 156 L257 152.8 L259.4 156 Z" fill="#e8501e"/><rect x="461.4" y="89.4" width="16.4" height="15" fill="#9dbbea"/><rect x="462" y="91.6" width="15.4" height="1" fill="#c6d8f5"/><rect x="462" y="94" width="15.4" height="1" fill="#c6d8f5"/><rect x="462" y="96.4" width="15.4" height="1" fill="#c6d8f5"/><rect x="462" y="98.8" width="15.4" height="1" fill="#c6d8f5"/><rect x="462" y="101.2" width="15.4" height="1" fill="#c6d8f5"/><path d="M470.6 89.8 H476.4 V95.4 H473.6 V92.4 H470.6 Z" fill="#ee5a28"/><path d="M472.6 94.6 H477.2 L474.9 97 Z" fill="#ee5a28"/><path d="M462 98.4 H464.6 V102 H467.8 V104.4 H462 Z" fill="#ee5a28"/><rect x="459.1" y="87.1" width="8.8" height="8.6" rx="0.8" fill="url(#gs)"/><rect x="460.6" y="88.5" width="5.8" height="5.8" fill="#e8ecf4"/><path d="M463.5 89.3 V93.5 M461.40000000000003 91.39999999999999 H465.6" stroke="#6a7590" stroke-width="1" fill="none"/><path d="M479.79 100.49 L479.90 101.60 L478.22 102.40 L477.99 103.17 L478.94 104.77 L478.23 105.63 L476.48 105.01 L475.77 105.39 L475.31 107.19 L474.20 107.30 L473.40 105.62 L472.63 105.39 L471.03 106.34 L470.17 105.63 L470.79 103.88 L470.41 103.17 L468.61 102.71 L468.50 101.60 L470.18 100.80 L470.41 100.03 L469.46 98.43 L470.17 97.57 L471.92 98.19 L472.63 97.81 L473.09 96.01 L474.20 95.90 L475.00 97.58 L475.77 97.81 L477.37 96.86 L478.23 97.57 L477.61 99.32 L477.99 100.03 Z M475.90 101.6 A1.7 1.7 0 1 0 472.50 101.6 A1.7 1.7 0 1 0 475.90 101.6 Z" fill="#615ec8" fill-rule="evenodd"/></svg>
  <div class="badge" style="left:128.5px;top:140px">2</div>
  <div class="badge" style="left:203px;top:80px">3</div>
  <!-- bottom -->
  <div class="a" style="left:233px;top:652px;width:770px;height:20px;background:#f1f1f1"></div>
  <div class="a" style="left:254px;top:654px;width:637px;height:17px;background:#c1c1c1"></div>
  <svg style="left:241px;top:658px" width="6" height="9" viewBox="0 0 6 9"><path d="M5.5 0V9L0.3 4.5Z" fill="#a3a3a3"/></svg>
  <svg style="left:991.5px;top:657.5px" width="6" height="10" viewBox="0 0 6 10"><path d="M0 0V10L5.8 5Z" fill="#505050"/></svg>
  <div class="a" style="left:233px;top:672px;width:770px;height:38px;background:#f3f3f3;border-top:1px solid #dcdcdc"></div>
  <svg style="left:815.5px;top:690.5px" width="12" height="17" viewBox="0 0 12 17"><path d="M0 0H2.4V17H0Z M11.6 0V17L2.4 8.5Z" fill="#4a4a4a"/></svg>
  <svg style="left:836px;top:690.5px" width="10" height="17" viewBox="0 0 10 17"><path d="M9.8 0V17L0 8.5Z" fill="#4a4a4a"/></svg>
  <svg style="left:956.5px;top:690.5px" width="10" height="17" viewBox="0 0 10 17"><path d="M0 0V17L9.6 8.5Z" fill="#4a4a4a"/></svg>
<div class="t" style="left:57.40px;top:33.33px;font-size:14.5px;letter-spacing:0.633px;color:#444">Relationship</div>
<div class="t" style="left:57.80px;top:56.64px;font-size:18.5px;letter-spacing:0.461px;color:#000;font-weight:bold">Event to Resource Requirement</div>
<div class="t" style="left:815.20px;top:32.86px;font-size:12.8px;letter-spacing:0.450px;color:#000;font-weight:bold">Working on solution: Demo</div>
<div class="t" style="left:21.70px;top:95.78px;font-size:14.2px;letter-spacing:0.538px;color:#000;font-weight:bold">Common</div>
<div class="t" style="left:55.30px;top:119.41px;font-size:14.4px;letter-spacing:0.612px;color:#3d3d3d">Information</div>
<div class="t" style="left:55.30px;top:144.21px;font-size:14.4px;letter-spacing:0.571px;color:#3d3d3d">Mappings</div>
<div class="t" style="left:261.60px;top:90.31px;font-size:13.1px;letter-spacing:0.381px;color:#333">New</div>
<div class="t" style="left:374.50px;top:90.31px;font-size:13.1px;letter-spacing:0.367px;color:#333">More Actions</div>
<div class="t" style="left:298.20px;top:129.86px;font-size:14.7px;letter-spacing:0.329px;color:#636363;font-weight:bold">Source Name</div>
<div class="t" style="left:486.80px;top:129.86px;font-size:14.7px;letter-spacing:0.354px;color:#636363;font-weight:bold">Source Display Name</div>
<div class="t" style="left:676.00px;top:129.86px;font-size:14.7px;letter-spacing:0.579px;color:#636363;font-weight:bold">Target Name</div>
<div class="t" style="left:865.20px;top:129.86px;font-size:14.7px;letter-spacing:0.088px;color:#636363;font-weight:bold">Target Display</div>
<div class="t" style="left:298.90px;top:176.59px;font-size:15.6px;letter-spacing:0.378px;color:#444">demo_duration</div>
<div class="t" style="left:488.30px;top:176.59px;font-size:15.6px;letter-spacing:0.519px;color:#444">Duration</div>
<div class="t" style="left:677.80px;top:176.59px;font-size:15.6px;letter-spacing:0.378px;color:#444">msdyn_duration</div>
<div class="t" style="left:868.20px;top:176.59px;font-size:15.6px;letter-spacing:0.590px;color:#444">Duration</div>
<div class="t" style="left:298.90px;top:222.59px;font-size:15.6px;letter-spacing:0.088px;color:#444">demo_end_date</div>
<div class="t" style="left:488.30px;top:222.59px;font-size:15.6px;letter-spacing:0.106px;color:#444">End date</div>
<div class="t" style="left:677.80px;top:222.59px;font-size:15.6px;letter-spacing:0.338px;color:#444">msdyn_todate</div>
<div class="t" style="left:868.50px;top:222.59px;font-size:15.6px;letter-spacing:0.139px;color:#444">To Date</div>
<div class="t" style="left:298.90px;top:268.59px;font-size:15.6px;letter-spacing:0.255px;color:#444">demo_eventid</div>
<div class="t" style="left:488.30px;top:268.59px;font-size:15.6px;letter-spacing:-0.511px;color:#444">Event</div>
<div class="t" style="left:678.80px;top:268.59px;font-size:15.6px;letter-spacing:-0.025px;color:#444">demo_event_resource...</div>
<div class="t" style="left:868.20px;top:268.59px;font-size:15.6px;letter-spacing:-0.486px;color:#444">Event</div>
<div class="t" style="left:298.70px;top:314.59px;font-size:15.6px;letter-spacing:0.069px;color:#444">demo_resource_type</div>
<div class="t" style="left:488.30px;top:314.59px;font-size:15.6px;letter-spacing:0.011px;color:#444">Resource type</div>
<div class="t" style="left:677.80px;top:314.59px;font-size:15.6px;letter-spacing:0.160px;color:#444">msdyn_resourcetype</div>
<div class="t" style="left:868.20px;top:314.59px;font-size:15.6px;letter-spacing:-0.150px;color:#444">Resource Type</div>
<div class="t" style="left:298.70px;top:360.59px;font-size:15.6px;letter-spacing:0.067px;color:#444">demo_start_date</div>
<div class="t" style="left:488.70px;top:360.59px;font-size:15.6px;letter-spacing:0.151px;color:#444">Start date</div>
<div class="t" style="left:677.80px;top:360.59px;font-size:15.6px;letter-spacing:0.364px;color:#444">msdyn_fromdate</div>
<div class="t" style="left:868.20px;top:360.59px;font-size:15.6px;letter-spacing:0.153px;color:#444">From Date</div>
<div class="t" style="left:260.10px;top:688.84px;font-size:17.2px;letter-spacing:0.014px;color:#333">1 - 5 of 5 (1 selected)</div>
<div class="t" style="left:876.50px;top:688.64px;font-size:17.2px;letter-spacing:-0.743px;color:#333">Page 1</div>
</div>
</body></html>
